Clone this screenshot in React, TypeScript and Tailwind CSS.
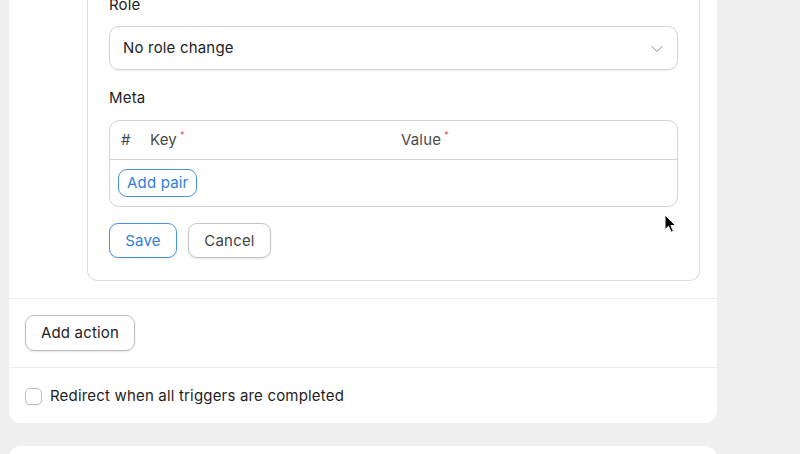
import { ChevronDown } from "lucide-react";

const Required = () => <span className="relative -top-[7px] ml-[3px] text-[9px] text-[#e5484d]">*</span>;

const Cursor = () => (
  <svg className="absolute left-[664px] top-[214px]" width="14" height="20" viewBox="0 0 14 20">
    <path
      d="M1 1 L1 15.5 L4.6 12.3 L7.2 18.2 L9.4 17.2 L6.9 11.5 L11.6 11.5 Z"
      fill="#000"
      stroke="#fff"
      strokeWidth="1"
      strokeLinejoin="round"
    />
  </svg>
);

export default function App() {
  return (
    <div className="relative h-[454px] w-[800px] overflow-hidden bg-[#efefef] font-['Inter',sans-serif] text-[15px] tracking-[0.012em] text-[#1d1d1f]">
      <div className="ml-[9px] w-[708px]">
        {/* action card */}
        <div className="rounded-b-xl bg-white">
          <div className="-mt-[7px] ml-[78px] mr-[17px] rounded-b-[10px] border-x border-b border-[#dcdcdc] px-[21px] pb-[22px]">
            <div className="leading-6">Role</div>
            <button
              type="button"
              className="mt-[9px] flex h-[44px] w-full items-center justify-between rounded-[10px] border border-[#d4d4d4] pl-[13px] pr-[10px] pt-px shadow-[0_1px_2px_rgba(0,0,0,0.08)]"
            >
              <span>No role change</span>
              <ChevronDown className="h-[20px] w-[20px] text-[#8a8a8a]" strokeWidth={1.2} />
            </button>

            <div className="mt-[16px] leading-6">Meta</div>
            <div className="mt-[10px] rounded-[10px] border border-[#d4d4d4]">
              <div className="flex h-[39px] items-center border-b border-[#d4d4d4] text-[#4a4a4a]">
                <span className="w-[40px] pl-[11px]">#</span>
                <span className="w-[251px]">
                  Key
                  <Required />
                </span>
                <span>
                  Value
                  <Required />
                </span>
              </div>
              <div className="px-[8px] py-[9px]">
                <button
                  type="button"
                  className="h-[28px] rounded-[9px] border border-[#4a90e2] px-[8px] text-[#2f7fd8]"
                >
                  Add pair
                </button>
              </div>
            </div>

            <div className="mt-[16px] flex gap-[11px]">
              <button
                type="button"
                className="h-[35px] w-[68px] rounded-[9px] border border-[#4a90e2] pt-px text-[#2f7fd8] shadow-[0_1px_2px_rgba(0,0,0,0.08)]"
              >
                Save
              </button>
              <button
                type="button"
                className="h-[35px] w-[83px] rounded-[9px] border border-[#c4c4c4] pt-px text-[#444] shadow-[0_1px_2px_rgba(0,0,0,0.1)]"
              >
                Cancel
              </button>
            </div>
          </div>

          <div className="mt-[17px] border-t border-[#ececec] px-[16px] py-[16px]">
            <button
              type="button"
              className="h-[36px] w-[110px] rounded-[9px] border border-[#bdbdbd] shadow-[0_1px_2px_rgba(0,0,0,0.1)]"
            >
              Add action
            </button>
          </div>

          <label className="flex h-[56px] items-center gap-[8px] border-t border-[#ececec] px-[16px] pt-[2px]">
            <span className="h-[17px] w-[17px] rounded-[5px] border border-[#bdbdbd] bg-white shadow-[0_1px_1px_rgba(0,0,0,0.06)]" />
            <span>Redirect when all triggers are completed</span>
          </label>
        </div>

        {/* next card */}
        <div className="mt-[23px] h-[40px] rounded-t-xl bg-white" />
      </div>
      <Cursor />
    </div>
  );
}
